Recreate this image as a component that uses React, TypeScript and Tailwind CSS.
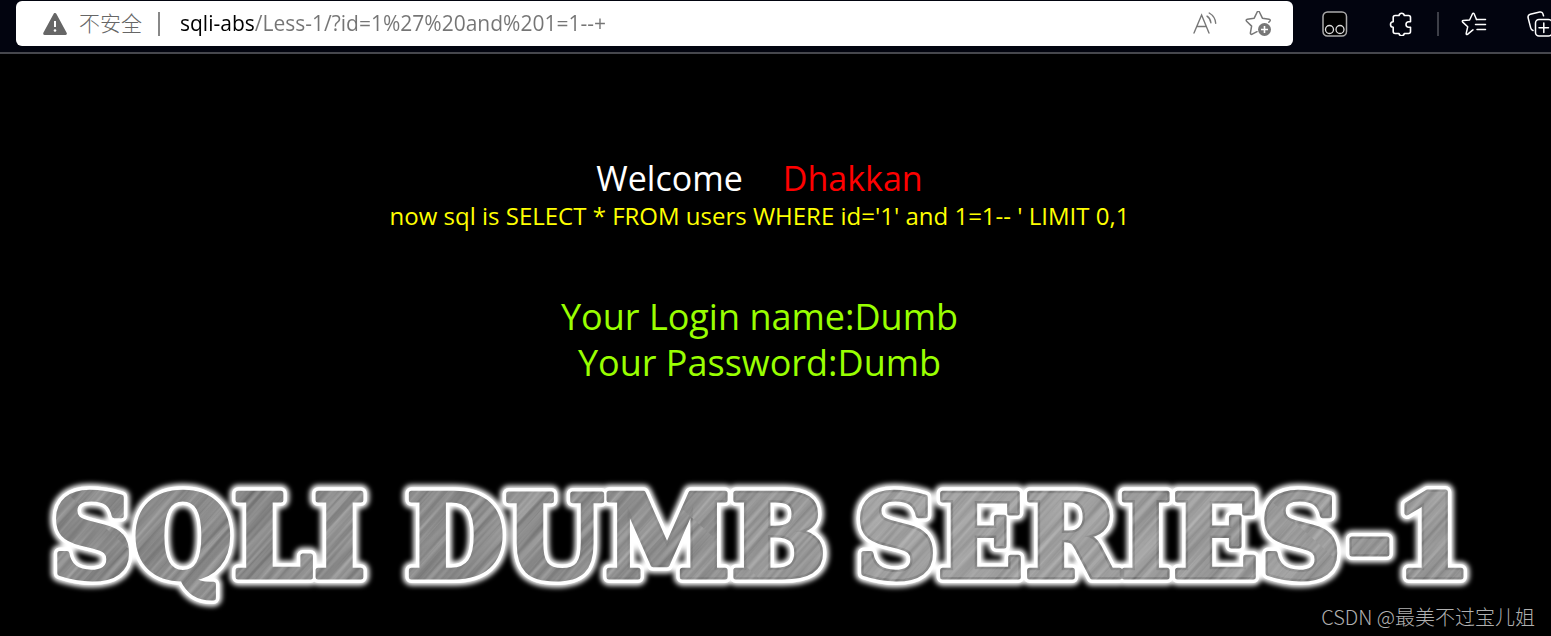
import { useState } from "react";

const WarningIcon = () => (
  <svg viewBox="0 0 24 22" className="h-[22px] w-6 shrink-0" aria-hidden="true">
    <path
      d="M12 1.5 22.3 20.5H1.7Z"
      fill="#666"
      stroke="#666"
      strokeWidth="3"
      strokeLinejoin="round"
    />
    <path d="M12 8v6" stroke="#fff" strokeWidth="2" />
    <circle cx="12" cy="17.5" r="1.3" fill="#fff" />
  </svg>
);

const ReadAloudIcon = () => (
  <svg
    viewBox="0 0 24 24"
    className="h-6 w-6"
    fill="none"
    stroke="#777"
    strokeWidth="1.4"
    strokeLinecap="round"
    aria-hidden="true"
  >
    <path d="M1 21 8.6 3 16 21M3.8 14.5h9.6" />
    <path d="M14 4.2c2.3 1.5 3.6 3.7 3.9 6.6M16.2 1c3.9 2.3 6.2 5.7 6.5 10.2" />
  </svg>
);

const AddFavoriteIcon = () => (
  <svg viewBox="0 0 27 26" className="h-[26px] w-[27px]" fill="none" aria-hidden="true">
    <path
      d="M7.2 23.2c-1 .5-2-.2-1.8-1.3l1.2-6.8-5-4.9c-.8-.8-.4-1.8.7-2l6.9-1 3-6.2c.5-1 1.7-1 2.2 0l3 6.2 6.7 1c1.2.2 1.5 1.3.7 2l-1 1M7.2 23.2l4.8-2.5"
      stroke="#777"
      strokeWidth="1.5"
      strokeLinecap="round"
      strokeLinejoin="round"
    />
    <circle cx="19.5" cy="18.5" r="6.5" fill="#777" />
    <path d="M19.5 15v7M16 18.5h7" stroke="#fff" strokeWidth="1.6" />
  </svg>
);

const MonkeyIcon = () => (
  <svg viewBox="0 0 26 26" className="h-[26px] w-[26px]" aria-hidden="true">
    <rect x="1" y="1" width="23.5" height="24" rx="4.5" fill="#000" stroke="#aaa" strokeWidth="1.5" />
    <g fill="none" stroke="#ddd" strokeWidth="1.3">
      <circle cx="7.5" cy="18.5" r="4" />
      <circle cx="18" cy="18.5" r="4" />
    </g>
  </svg>
);

const ExtensionsIcon = () => (
  <svg viewBox="0 0 24 24" className="h-6 w-6" fill="none" aria-hidden="true">
    <path
      d="M10 3.5a2.7 2.7 0 0 1 5.3 0H19.5c1.2 0 2 .8 2 2v4.3h-1.8a2.7 2.7 0 0 0 0 5.4h1.8v4.3c0 1.2-.8 2-2 2h-4.2a2.7 2.7 0 0 1-5.3 0H6.2c-1.2 0-2-.8-2-2v-4.3a2.7 2.7 0 0 1 0-5.4V5.5c0-1.200.8-2 2-2Z"
      stroke="#fff"
      strokeWidth="1.6"
      strokeLinejoin="round"
    />
  </svg>
);

const FavoritesIcon = () => (
  <svg
    viewBox="0 0 26 24"
    className="h-6 w-[26px]"
    fill="none"
    stroke="#fff"
    strokeWidth="1.5"
    strokeLinecap="round"
    strokeLinejoin="round"
    aria-hidden="true"
  >
    <path d="m11 18.6-4.5 3.7c-.9.5-1.5 0-1.3-.9l1.5-6.6-5-4.7c-.7-.7-.4-1.4.5-1.5l6.4-.6L11.5 1.8c.4-.9 1.2-.9 1.6 0L15.5 7.5M11 18.6l1-.7" />
    <path d="M15.5 7.5H24.5M14.5 12.5H24.5M16 17.5h8.5" />
  </svg>
);

const CollectionsIcon = () => (
  <svg
    viewBox="0 0 26 26"
    className="h-[26px] w-[26px] shrink-0"
    fill="none"
    stroke="#fff"
    strokeWidth="1.5"
    strokeLinecap="round"
    strokeLinejoin="round"
    aria-hidden="true"
  >
    <path d="M6 19.5c-1.3-.5-2-1.3-2.3-2.6L1.1 6.8C.7 5 1.5 3.8 3.2 3.3l9.5-2.2c1.7-.4 2.9.3 3.3 2l.5 1.7" />
    <rect x="8.5" y="8.5" width="16.5" height="16.5" rx="3.5" />
    <path d="M16.8 12v9.5M12 16.8h9.5" />
  </svg>
);

const words = [
  { text: "SQLI", x: 11 },
  { text: "DUMB", x: 366 },
  { text: "SERIES-1", x: 815 },
];

const BannerWords = () => (
  <>
    {words.map((word) => (
      <text key={word.text} x={word.x} y="108">
        {word.text}
      </text>
    ))}
  </>
);

const Banner = () => (
  <svg
    viewBox="0 0 1479 136"
    className="w-full overflow-visible"
    fontFamily="'DejaVu Serif', serif"
    fontWeight="700"
    fontSize="114"
    strokeLinejoin="round"
  >
    <defs>
      <filter id="glow" x="-5%" y="-20%" width="110%" height="140%">
        <feGaussianBlur stdDeviation="2.5" />
      </filter>
      <filter id="brushed" x="0" y="0" width="100%" height="100%" colorInterpolationFilters="sRGB">
        <feTurbulence type="fractalNoise" baseFrequency="0.2 0.006" numOctaves="3" seed="4" />
        <feColorMatrix values="0.3 0 0 0 0.39  0.3 0 0 0 0.39  0.3 0 0 0 0.39  0 0 0 0 1" />
      </filter>
      <pattern
        id="metal"
        width="400"
        height="400"
        patternUnits="userSpaceOnUse"
        patternTransform="rotate(42)"
      >
        <rect width="400" height="400" filter="url(#brushed)" />
      </pattern>
      <linearGradient id="shine" gradientUnits="userSpaceOnUse" x1="0" y1="0" x2="1479" y2="0">
        <stop offset="0" stopColor="#fff" stopOpacity="0" />
        <stop offset="0.35" stopColor="#fff" stopOpacity="0.02" />
        <stop offset="0.62" stopColor="#fff" stopOpacity="0.2" />
        <stop offset="1" stopColor="#fff" stopOpacity="0.1" />
      </linearGradient>
    </defs>
    <g fill="#fff" stroke="#fff" strokeWidth="17" filter="url(#glow)">
      <BannerWords />
    </g>
    <g fill="#fff" stroke="#fff" strokeWidth="12" aria-hidden="true">
      <BannerWords />
    </g>
    <g fill="url(#metal)" stroke="url(#metal)" strokeWidth="5" aria-hidden="true">
      <BannerWords />
    </g>
    <g fill="url(#shine)" aria-hidden="true">
      <BannerWords />
    </g>
  </svg>
);

const Toolbar = () => {
  const [url, setUrl] = useState("sqli-abs/Less-1/?id=1%27%20and%201=1--+");

  return (
    <header className="flex h-[54px] items-start overflow-hidden border-b-2 border-[#46474d] bg-[#02040f] pt-px pl-4">
      <div className="flex h-[45px] min-w-0 flex-1 items-center rounded-md bg-white pr-[21px] pl-[27px]">
        <WarningIcon />
        <span className="ml-3 shrink-0 text-[21px] font-light text-[#666]">不安全</span>
        <span className="mx-4 h-6 w-0.5 shrink-0 bg-[#888]" />
        <input
          aria-label="Address"
          value={url}
          onChange={(e) => setUrl(e.target.value)}
          spellCheck={false}
          className="min-w-0 flex-1 bg-[linear-gradient(90deg,#000_78px,#757575_78px)] bg-clip-text pl-1 text-[21px] text-transparent caret-black outline-none"
        />
        <button type="button" aria-label="Read aloud">
          <ReadAloudIcon />
        </button>
        <button type="button" aria-label="Add to favorites" className="ml-7">
          <AddFavoriteIcon />
        </button>
      </div>
      <div className="flex h-[45px] w-[258px] shrink-0 items-center pl-[29px]">
        <button type="button" aria-label="Tampermonkey">
          <MonkeyIcon />
        </button>
        <button type="button" aria-label="Extensions" className="ml-[41px]">
          <ExtensionsIcon />
        </button>
        <span className="ml-6 h-6 w-0.5 shrink-0 bg-[#3d3f48]" />
        <button type="button" aria-label="Favorites" className="ml-[22px]">
          <FavoritesIcon />
        </button>
        <button type="button" aria-label="Collections" className="ml-10">
          <CollectionsIcon />
        </button>
      </div>
    </header>
  );
};

const App = () => {
  return (
    <div className="flex min-h-screen flex-col bg-black font-['Open_Sans','Noto_Sans_CJK_SC',sans-serif]">
      <Toolbar />
      <main className="flex flex-col items-center pt-[100px] pr-8 text-center">
        <h1 className="flex gap-10 text-[34px] leading-[48px] text-white">
          Welcome <span className="text-[#ff0000]">Dhakkan</span>
        </h1>
        <p className="text-2xl leading-7 font-medium text-[#ffff00]">
          now sql is SELECT * FROM users WHERE id='1' and 1=1-- ' LIMIT 0,1
        </p>
        <p className="mt-16 text-[36px] leading-[46px] text-[#99ff00]">
          Your Login name:Dumb
          <br />
          Your Password:Dumb
        </p>
        <div className="mt-[83px] w-full pl-10">
          <Banner />
        </div>
      </main>
      <footer className="pr-4 text-right font-['Noto_Sans_CJK_SC',sans-serif] text-[20px] leading-6 font-light text-[#b0b0b0]">
        CSDN @最美不过宝儿姐
      </footer>
    </div>
  );
};

export default App;
